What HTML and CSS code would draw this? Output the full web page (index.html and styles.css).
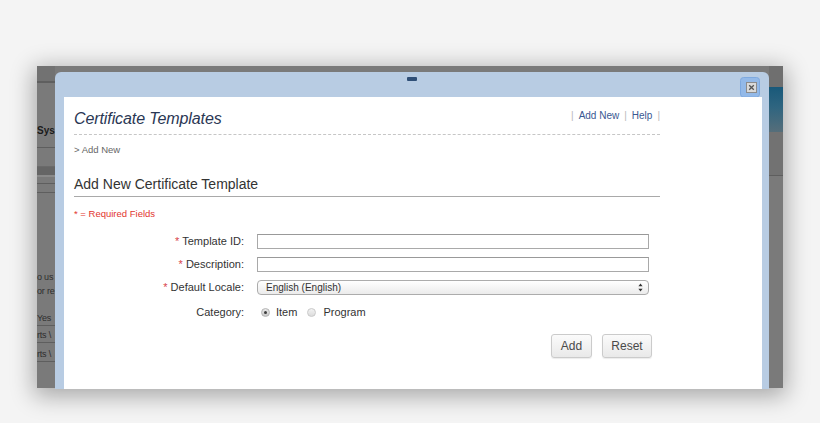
FILE: index.html
```html
<!DOCTYPE html>
<html>
<head>
<meta charset="utf-8">
<link rel="stylesheet" href="styles.css">
</head>
<body>
<div class="page">
  <div class="shot">
    <div class="app">
      <div class="app-left">
        <div class="al-top"></div>
        <div class="al-sp h37"></div>
        <div class="al-title">Sys</div>
        <div class="al-sp h5 line-b"></div>
        <div class="al-sp h18"></div>
        <div class="al-band"></div>
        <div class="al-sp h6 line-b"></div>
        <div class="al-sp h8 line-b"></div>
        <div class="al-sp h77"></div>
        <div class="al-text">o us</div>
        <div class="al-text">or re</div>
        <div class="al-sp h13"></div>
        <div class="al-text line-b">Yes</div>
        <div class="al-sp h2"></div>
        <div class="al-text line-b">rts \</div>
        <div class="al-sp h4"></div>
        <div class="al-text line-b">rts \</div>
      </div>
      <div class="app-mid"></div>
      <div class="app-right">
        <div class="ar-top"></div>
        <div class="ar-teal"></div>
        <div class="ar-sp h43 line-b"></div>
      </div>
    </div>

    <div class="modal">
      <div class="modal-bar">
        <span class="handle"></span>
        <button type="button" class="close" aria-label="Close">
          <svg width="20" height="20" viewBox="0 0 20 20">
            <rect x="0.5" y="0.5" width="19" height="19.5" rx="3" fill="#93b9e8" stroke="#7ea9df"/>
            <rect x="6.5" y="5.5" width="10" height="10" fill="#dadada" stroke="#8c8c8c"/>
            <path d="M9.2 8.2l4.6 4.6M13.8 8.2l-4.6 4.6" stroke="#555" stroke-width="1.3"/>
          </svg>
        </button>
      </div>
      <div class="modal-body">
        <div class="panel">
          <div class="panel-head">
            <h1 class="title">Certificate Templates</h1>
            <nav class="links">
              <span class="sep">|</span><a class="lnk">Add New</a><span class="sep">|</span><a class="lnk">Help</a><span class="sep">|</span>
            </nav>
          </div>
          <div class="crumb">&gt; Add New</div>
          <h2 class="section">Add New Certificate Template</h2>
          <div class="req">* = Required Fields</div>
          <form class="form">
            <div class="grid">
              <label class="lbl"><span class="star">*</span> Template ID:</label>
              <div class="input"></div>
              <label class="lbl"><span class="star">*</span> Description:</label>
              <div class="input"></div>
              <label class="lbl"><span class="star">*</span> Default Locale:</label>
              <div class="select">
                <span>English (English)</span>
                <svg width="5" height="9" viewBox="0 0 5 9"><path d="M2.5 0.5L4.6 3.3H0.4Z M2.5 8.5L4.6 5.7H0.4Z" fill="#333"/></svg>
              </div>
              <label class="lbl cat">Category:</label>
              <div class="radios">
                <span class="radio on"></span><span class="rtext">Item</span>
                <span class="radio"></span><span class="rtext">Program</span>
              </div>
            </div>
            <div class="actions">
              <button type="button" class="btn add">Add</button>
              <button type="button" class="btn reset">Reset</button>
            </div>
          </form>
        </div>
      </div>
    </div>
  </div>
</div>
</body>
</html>
```

FILE: styles.css
```css
html, body {
  margin: 0;
  padding: 0;
}
body {
  background: #f4f4f4;
  font-family: "Liberation Sans", Arial, sans-serif;
  width: 820px;
  height: 423px;
  overflow: hidden;
}
.page {
  padding: 66px 0 0 37px;
}
.shot {
  position: relative;
  width: 746px;
  height: 322px;
  background: #7a7a7a;
  box-shadow: 0 5px 22px 3px rgba(0, 0, 0, 0.32);
}
.app {
  display: flex;
  height: 100%;
}
.app-left {
  width: 18px;
  display: flex;
  flex-direction: column;
  font-size: 9px;
  color: #2e2e2e;
}
.app-mid {
  flex: 1;
}
.app-right {
  width: 14px;
  display: flex;
  flex-direction: column;
}
.al-top {
  height: 15px;
  background: #727272;
  border-bottom: 2px solid #5f5f5f;
}
.al-sp { flex: none; }
.h2 { height: 2px; }
.h4 { height: 4px; }
.h5 { height: 5px; }
.h6 { height: 6px; }
.h8 { height: 8px; }
.h13 { height: 13px; }
.h18 { height: 18px; }
.h37 { height: 37px; }
.h43 { height: 43px; }
.h77 { height: 77px; }
.line-b { border-bottom: 1px solid #5e5e5e; }
.al-title {
  height: 22px;
  line-height: 22px;
  font-weight: bold;
  font-size: 10px;
  color: #1b1b1b;
  white-space: nowrap;
}
.al-band {
  height: 8px;
  background: #656565;
  border-top: 1px solid #6a6a6a;
  border-bottom: 2px solid #8a8a8a;
}
.al-text {
  height: 14px;
  line-height: 14px;
  white-space: nowrap;
  letter-spacing: -0.2px;
}
.ar-top {
  height: 21px;
  background: #6f6f6f;
}
.ar-teal {
  height: 45px;
  background: linear-gradient(#19597a, #2f6580 45%, #566e7a);
}
.ar-sp { background: #727272; }

/* Modal */
.modal {
  position: absolute;
  left: 18px;
  top: 6px;
  width: 714px;
  height: 317px;
  box-sizing: border-box;
  padding: 0 7px 0 9px;
  background: #b8cce3;
  border-radius: 6px 6px 0 0;
  display: flex;
  flex-direction: column;
}
.modal-bar {
  flex: none;
  height: 25px;
  box-sizing: border-box;
  padding-top: 5px;
  position: relative;
  display: flex;
  justify-content: center;
  align-items: flex-start;
}
.handle {
  width: 10px;
  height: 4px;
  background: #2f4f77;
  border-radius: 1px;
  margin-left: -2px;
}
.close {
  position: absolute;
  right: 2px;
  top: 5px;
  width: 20px;
  height: 20px;
  padding: 0;
  margin: 0;
  border: 0;
  background: none;
  display: block;
}
.close svg { display: block; }
.modal-body {
  flex: 1;
  background: #fff;
  padding: 12px 0 0 10px;
}
.panel {
  width: 586px;
}
.panel-head {
  display: flex;
  justify-content: space-between;
  align-items: flex-start;
  padding-bottom: 5px;
  border-bottom: 1px dashed #c6c6c6;
}
.title {
  margin: 0;
  font-size: 16px;
  line-height: 20px;
  font-style: italic;
  font-weight: normal;
  color: #2a3754;
  letter-spacing: -0.1px;
}
.links {
  display: flex;
  gap: 5px;
  font-size: 10px;
  line-height: 14px;
}
.sep { color: #b9b9b9; }
.lnk { color: #3a5892; }
.crumb {
  margin-top: 9px;
  font-size: 9.5px;
  line-height: 12px;
  color: #666;
}
.section {
  margin: 19px 0 0;
  padding-bottom: 3px;
  border-bottom: 1px solid #a9a9a9;
  font-size: 14px;
  line-height: 18px;
  font-weight: normal;
  color: #333;
}
.req {
  margin-top: 11px;
  font-size: 9.5px;
  line-height: 12px;
  color: #e2352f;
}
.form {
  margin: 14px 0 0;
  width: 578px;
}
.grid {
  display: grid;
  grid-template-columns: 170px 392px;
  grid-template-rows: 15px 15px 15px 18px;
  column-gap: 13px;
  row-gap: 8px;
}
.lbl {
  text-align: right;
  font-size: 11px;
  line-height: 15px;
  color: #333;
  white-space: nowrap;
}
.lbl.cat { line-height: 18px; }
.star { color: #d8434b; }
.input {
  box-sizing: border-box;
  height: 15px;
  border: 1px solid #a9a9a9;
  border-top-color: #999;
  background: #fff;
}
.select {
  box-sizing: border-box;
  height: 15px;
  border: 1px solid #acacac;
  border-radius: 4px;
  background: linear-gradient(#ffffff, #ebebeb);
  display: flex;
  align-items: center;
  justify-content: space-between;
  padding: 0 5px 0 8px;
  font-size: 10px;
  color: #333;
}
.select svg { display: block; }
.radios {
  display: flex;
  align-items: center;
  font-size: 11px;
  color: #333;
  padding-left: 4px;
}
.radio {
  box-sizing: border-box;
  width: 9px;
  height: 9px;
  border-radius: 50%;
  border: 1px solid #c9c9c9;
  background: linear-gradient(#f2f2f2, #dcdcdc);
  display: flex;
  align-items: center;
  justify-content: center;
  margin-right: 7px;
}
.radio.on {
  border-color: #b3b3b3;
  background: linear-gradient(#e9e9e9, #c9c9c9);
  margin-right: 6px;
}
.radio.on::after {
  content: "";
  width: 3px;
  height: 3px;
  border-radius: 50%;
  background: #3c3c3c;
}
.rtext { margin-right: 10px; }
.actions {
  display: flex;
  justify-content: flex-end;
  gap: 10px;
  margin-top: 13px;
}
.btn {
  box-sizing: border-box;
  height: 24px;
  padding: 0;
  margin: 0;
  border: 1px solid #cbcbcb;
  border-radius: 3px;
  background: linear-gradient(#fbfbfb, #e9e9e9);
  box-shadow: 0 1px 1px rgba(0, 0, 0, 0.08);
  font-family: "Liberation Sans", Arial, sans-serif;
  font-size: 12px;
  color: #4a4a4a;
}
.btn.add { width: 41px; }
.btn.reset { width: 50px; }
```
